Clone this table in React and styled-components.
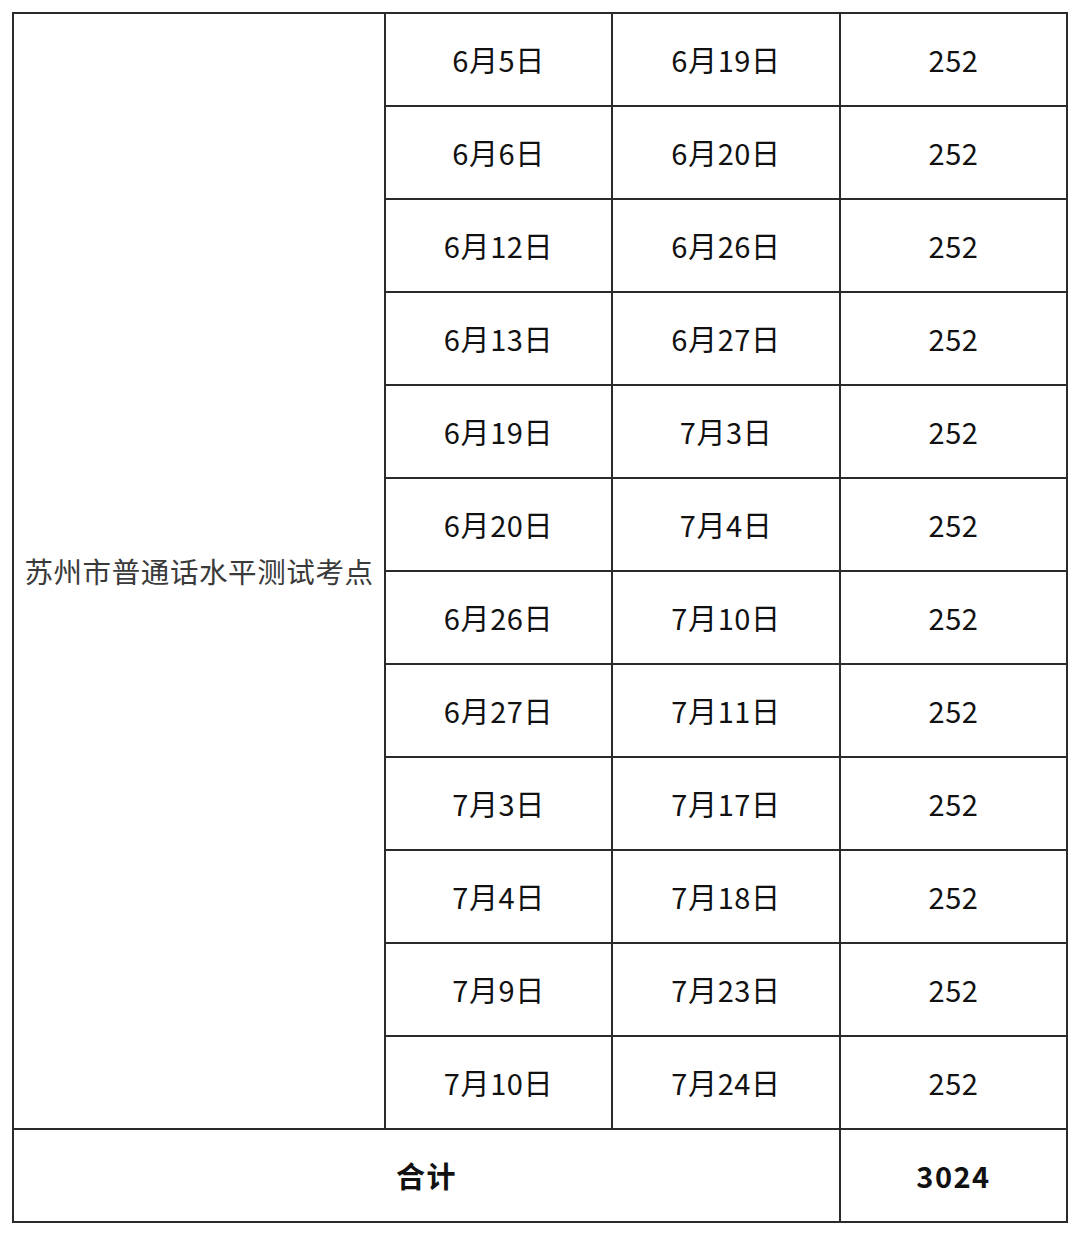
import React from "react";
import styled, { createGlobalStyle } from "styled-components";

const GlobalStyle = createGlobalStyle`
  html, body {
    margin: 0;
    padding: 0;
    background: #fff;
  }
  body {
    font-family: "Noto Sans CJK SC", "Noto Sans", sans-serif;
  }
`;

const Page = styled.div`
  padding: 12px 0 0 12px;
  width: 1080px;
  box-sizing: border-box;
`;

const Table = styled.table`
  width: 1056px;
  table-layout: fixed;
  border-collapse: collapse;
  border: 2px solid #2b2b2b;
`;

const Cell = styled.td`
  border: 2px solid #2b2b2b;
  height: 91px;
  padding: 0;
  text-align: center;
  vertical-align: middle;
  font-size: ${(props) => (props.label ? "28.5px" : "29px")};
  color: ${(props) => (props.label ? "#3a3a3a" : "#111")};
  font-weight: ${(props) => (props.bold ? 700 : 400)};
  letter-spacing: ${(props) => (props.bold ? "1.5px" : "0.6px")};
  line-height: 1;
`;

const rows = [
  ["6月5日", "6月19日"],
  ["6月6日", "6月20日"],
  ["6月12日", "6月26日"],
  ["6月13日", "6月27日"],
  ["6月19日", "7月3日"],
  ["6月20日", "7月4日"],
  ["6月26日", "7月10日"],
  ["6月27日", "7月11日"],
  ["7月3日", "7月17日"],
  ["7月4日", "7月18日"],
  ["7月9日", "7月23日"],
  ["7月10日", "7月24日"],
];

const App = () => {
  return (
    <Page>
      <GlobalStyle />
      <Table>
        <colgroup>
          <col style={{ width: "372px" }} />
          <col style={{ width: "227px" }} />
          <col style={{ width: "228px" }} />
          <col style={{ width: "227px" }} />
        </colgroup>
        <tbody>
          {rows.map((r, i) => (
            <tr key={i}>
              {i === 0 && (
                <Cell label rowSpan={rows.length}>
                  苏州市普通话水平测试考点
                </Cell>
              )}
              <Cell>{r[0]}</Cell>
              <Cell>{r[1]}</Cell>
              <Cell>252</Cell>
            </tr>
          ))}
          <tr>
            <Cell bold colSpan={3}>
              合计
            </Cell>
            <Cell bold>3024</Cell>
          </tr>
        </tbody>
      </Table>
    </Page>
  );
};

export default App;
